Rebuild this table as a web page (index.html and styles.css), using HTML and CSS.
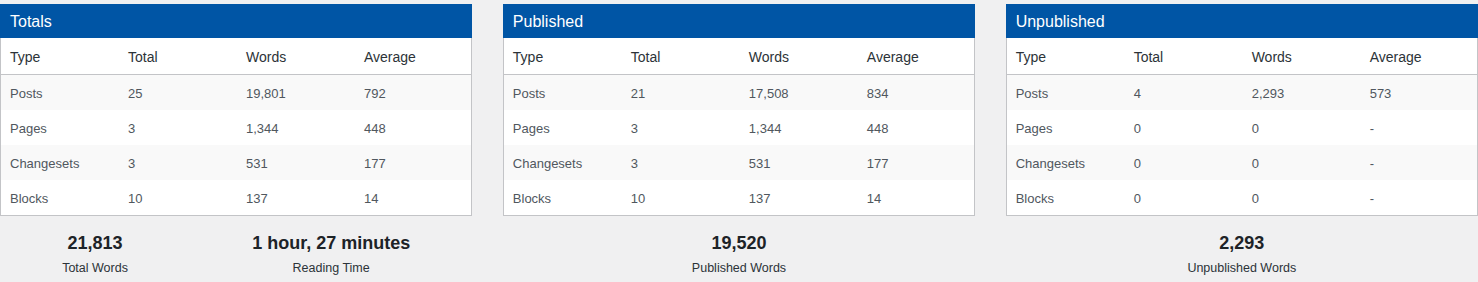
FILE: index.html
```html
<!DOCTYPE html>
<html>
<head>
<meta charset="utf-8">
<link rel="stylesheet" href="styles.css">
</head>
<body>
<div class="grid">
  <section class="col">
    <div class="panel">
      <h2 class="panel-title">Totals</h2>
      <table class="stats">
        <colgroup><col class="c1"><col class="c2"><col class="c3"><col class="c4"></colgroup>
        <thead><tr><th>Type</th><th>Total</th><th>Words</th><th>Average</th></tr></thead>
        <tbody>
          <tr><td>Posts</td><td>25</td><td>19,801</td><td>792</td></tr>
          <tr><td>Pages</td><td>3</td><td>1,344</td><td>448</td></tr>
          <tr><td>Changesets</td><td>3</td><td>531</td><td>177</td></tr>
          <tr><td>Blocks</td><td>10</td><td>137</td><td>14</td></tr>
        </tbody>
      </table>
    </div>
    <div class="summary">
      <div class="stat"><div class="stat-num">21,813</div><div class="stat-label">Total Words</div></div>
      <div class="stat"><div class="stat-num">1 hour, 27 minutes</div><div class="stat-label">Reading Time</div></div>
    </div>
  </section>
  <section class="col">
    <div class="panel">
      <h2 class="panel-title">Published</h2>
      <table class="stats">
        <colgroup><col class="c1"><col class="c2"><col class="c3"><col class="c4"></colgroup>
        <thead><tr><th>Type</th><th>Total</th><th>Words</th><th>Average</th></tr></thead>
        <tbody>
          <tr><td>Posts</td><td>21</td><td>17,508</td><td>834</td></tr>
          <tr><td>Pages</td><td>3</td><td>1,344</td><td>448</td></tr>
          <tr><td>Changesets</td><td>3</td><td>531</td><td>177</td></tr>
          <tr><td>Blocks</td><td>10</td><td>137</td><td>14</td></tr>
        </tbody>
      </table>
    </div>
    <div class="summary">
      <div class="stat"><div class="stat-num">19,520</div><div class="stat-label">Published Words</div></div>
    </div>
  </section>
  <section class="col">
    <div class="panel">
      <h2 class="panel-title">Unpublished</h2>
      <table class="stats">
        <colgroup><col class="c1"><col class="c2"><col class="c3"><col class="c4"></colgroup>
        <thead><tr><th>Type</th><th>Total</th><th>Words</th><th>Average</th></tr></thead>
        <tbody>
          <tr><td>Posts</td><td>4</td><td>2,293</td><td>573</td></tr>
          <tr><td>Pages</td><td>0</td><td>0</td><td>-</td></tr>
          <tr><td>Changesets</td><td>0</td><td>0</td><td>-</td></tr>
          <tr><td>Blocks</td><td>0</td><td>0</td><td>-</td></tr>
        </tbody>
      </table>
    </div>
    <div class="summary">
      <div class="stat"><div class="stat-num">2,293</div><div class="stat-label">Unpublished Words</div></div>
    </div>
  </section>
</div>
</body>
</html>
```
FILE: styles.css
```css
html, body {
  margin: 0;
  padding: 0;
  background: #f0f0f1;
  font-family: "Liberation Sans", Arial, sans-serif;
  color: #50575e;
}
.grid {
  display: grid;
  grid-template-columns: repeat(3, 1fr);
  column-gap: 30.5px;
  padding-top: 4px;
}
.panel {
  background: #fff;
  border: 1px solid #c3c4c7;
  border-top: none;
}
.panel-title {
  margin: 0 -1px;
  background: #0055a5;
  color: #fff;
  font-size: 16px;
  font-weight: 400;
  height: 34px;
  line-height: 36px;
  padding: 0 10px;
  box-sizing: border-box;
}
.stats {
  width: 100%;
  border-collapse: collapse;
  table-layout: fixed;
  font-size: 13px;
}
.stats .c1 { width: 117px; }
.stats .c2 { width: 118px; }
.stats .c3 { width: 118px; }
.stats th {
  text-align: left;
  font-weight: 400;
  font-size: 14px;
  color: #2c3338;
  height: 34px;
  padding: 2px 0 0 10px;
  border-bottom: 1px solid #c3c4c7;
}
.stats td {
  height: 33px;
  padding: 2px 0 0 10px;
}
.stats th:first-child,
.stats td:first-child {
  padding-left: 9px;
}
.stats tbody tr:nth-child(odd) {
  background: #f9f9f9;
}
.summary {
  display: flex;
  justify-content: space-around;
  padding-top: 14px;
  text-align: center;
}
.stat-num {
  font-size: 18px;
  line-height: 26px;
  font-weight: 700;
  color: #1d2327;
}
.stat-label {
  font-size: 12.5px;
  line-height: 24px;
  color: #2c3338;
}
```
